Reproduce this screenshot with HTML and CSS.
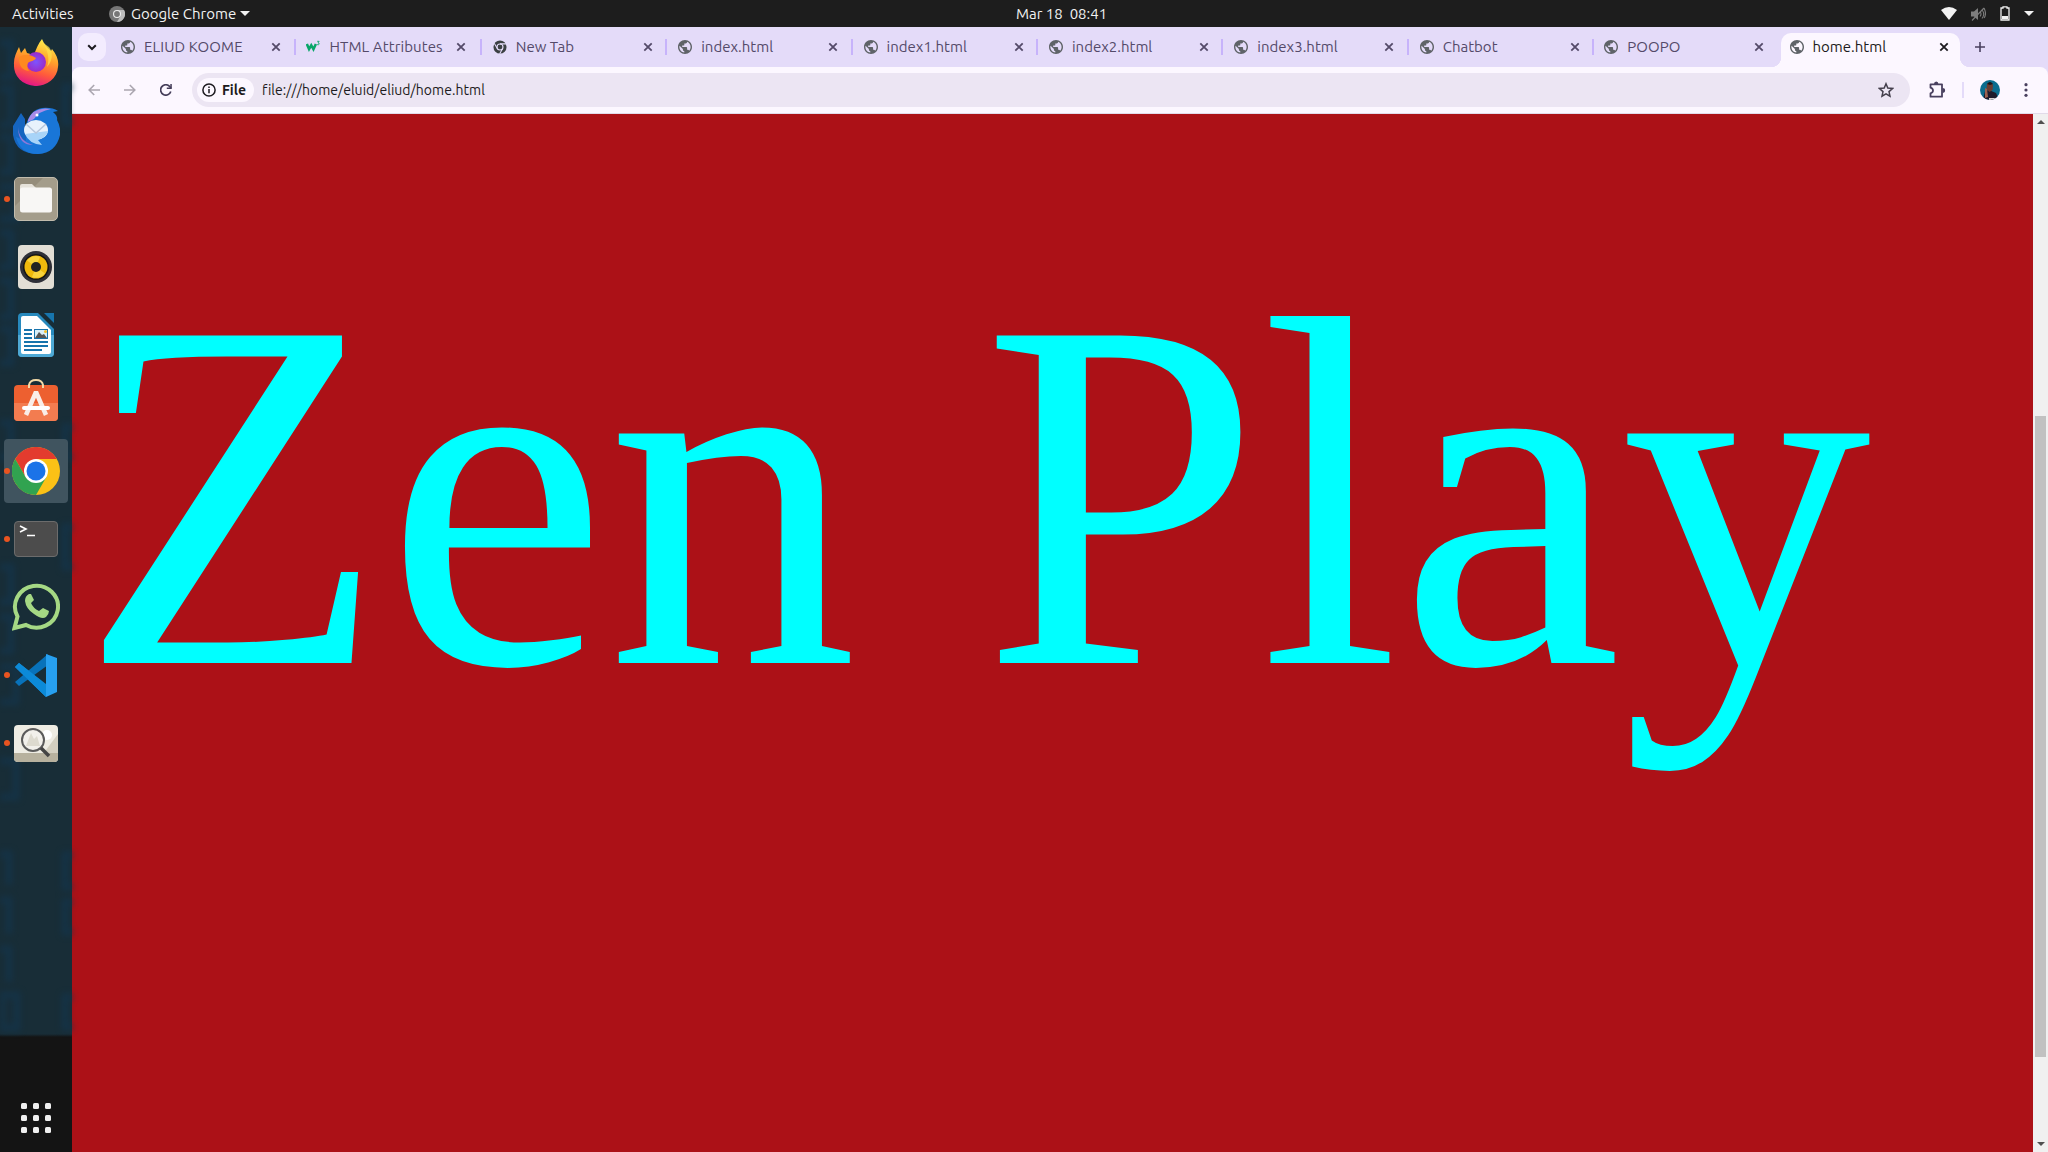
FILE: index.html
```html
<!DOCTYPE html>
<html lang="en">
<head>
<meta charset="utf-8">
<title>home.html</title>
<link rel="stylesheet" href="styles.css">
</head>
<body>
<svg class="defs" width="0" height="0" aria-hidden="true">
  <symbol id="globe" viewBox="2 2 20 20"><path d="M12 2C6.480 2 2 6.480 2 12s4.480 10 10 10 10-4.480 10-10S17.520 2 12 2zm-1 17.930c-3.950-.49-7-3.850-7-7.930 0-.62.080-1.210.210-1.790L9 15v1c0 1.100.9 2 2 2v1.930zm6.900-2.540c-.26-.81-1-1.390-1.900-1.390h-1v-3c0-.55-.45-1-1-1H8v-2h2c.55 0 1-.45 1-1V7h2c1.100 0 2-.9 2-2v-.41c2.930 1.190 5 4.060 5 7.410 0 2.080-.8 3.970-2.100 5.390z" fill="#5f6368"/></symbol>
  <symbol id="close" viewBox="0 0 10 10"><path d="M1.3 1.3 8.7 8.7M8.7 1.3 1.3 8.7" stroke="currentColor" stroke-width="1.8"/></symbol>
  <symbol id="chrome-mono" viewBox="0 0 16 16"><circle cx="8" cy="8" r="7.5" fill="#3c4043"/><circle cx="8" cy="8" r="3.4" fill="none" stroke="#e4dbf9" stroke-width="1.3"/><path d="M8 4.4H15M4.9 9.8 1.4 3.8M11.1 9.8 7.6 15.8" stroke="#e4dbf9" stroke-width="1.2"/></symbol>
</svg>

<header class="topbar">
  <span class="activities">Activities</span>
  <div class="app-menu">
    <svg width="16" height="16" viewBox="0 0 16 16"><circle cx="8" cy="8" r="8" fill="#777"/><path d="M8 4H15A8 8 0 0 1 8 16L11.5 10z" fill="#bbb"/><circle cx="8" cy="8" r="4" fill="#eee"/><circle cx="8" cy="8" r="2.9" fill="#777"/></svg>
    <span class="app-name">Google Chrome</span>
    <i class="caret"></i>
  </div>
  <span class="clock">Mar 18&nbsp; 08:41</span>
  <div class="tray">
    <svg width="16" height="13" viewBox="0 0 16 13"><path d="M0 3Q8-3 16 3L8 13z" fill="#f2f2f2"/></svg>
    <svg width="15" height="14" viewBox="0 0 15 14"><path d="M0 4.5h3L7 1v12L3 9.500H0z" fill="#7d7d7d"/><path d="M9 4.500q2 2.500 0 5M11 3q3.500 4 0 8.500M13 1q3 6 0 10M1 13.500 13 1" fill="none" stroke="#7d7d7d" stroke-width="1.100"/></svg>
    <svg width="10" height="15" viewBox="0 0 10 15"><path d="M1 2h2V.8h4V2h2v12H1z" fill="none" stroke="#f2f2f2" stroke-width="1.300"/><path d="M2 10h6v3H2z" fill="#f2f2f2"/></svg>
    <i class="caret"></i>
  </div>
</header>

<div class="desktop">
  <nav class="dock">
    <svg class="wallpaper" width="72" height="1008" viewBox="0 0 72 1008"><g fill="none" stroke="#14344a" stroke-width="7"><path d="M0 16H11V50H0M0 62H11V98H0M0 110H11V145H0M0 160H16V192H0M0 206H11V240H0M0 254H11V290H0M0 302H11V336H0M0 396H11V430H0M0 540H11V575H0M0 590H11V624H0M0 640H16V675H0M0 734H16V770H0M0 827H9V858M0 873H9V907M0 922H9V955M2 968H17V1001H2zM72 828H65V860H72M72 875H65V905H72M72 970H65V1000H72M72 500H65V540H72M72 60H65V95H72M72 400H65V430H72"/></g></svg>
    <div class="launcher firefox"><svg width="48" height="48" viewBox="0 0 48 48"><defs><linearGradient id="ff" x1=".7" y1="0" x2=".4" y2="1"><stop offset="0" stop-color="#fff44f"/><stop offset=".4" stop-color="#ffa12b"/><stop offset=".7" stop-color="#ff5a3c"/><stop offset="1" stop-color="#e31587"/></linearGradient><radialGradient id="ffp"><stop offset="0" stop-color="#7c54ff"/><stop offset="1" stop-color="#9b2bc8"/></radialGradient></defs><path d="M2 27C1.500 20 4 15 7 9l2 6 4-5 2 5 7 2c2-6 4-11 8-16 2 5 5 8 9 12l1-2c5 6 7 12 6 18a22 20 0 0 1-44-2z" fill="url(#ff)"/><circle cx="24" cy="24" r="10" fill="url(#ffp)"/><path d="M7 19c6-3 10-3 17 1-1 3-6 3-8 5-1 3-1 5 1 8C9 32 7 27 7 19z" fill="#ff8a20"/><path d="M30 4c6 8 8 17 5 25 6-6 6-15 2-20z" fill="#ffe04a" opacity=".7"/></svg></div>
    <div class="launcher"><svg width="48" height="48" viewBox="0 0 48 48"><path d="M1 19 9 6 13 12 13 21 20 38 32 46 26 47Q4 47 1 28z" fill="#1565c0"/><path d="M14 18Q18 3 30 1 40 0 46 4L41 5Q46 9 45 13 49 20 48 28 44 46 26 47 8 47 4 30L14 34z" fill="#1976d8"/><path d="M16 13Q20 2 33 1.500L39 2Q27 4 22 12L16 15z" fill="#a78be8"/><path d="M6 20q1 14 15 18-15 0-15-18z" fill="#8c78d8"/><ellipse cx="24" cy="23" rx="12" ry="10" fill="#e8f2fc"/><path d="M13 27q4 10 17 11l-4-5q9-3 10-9z" fill="#a8d4f8"/><path d="M14 17l10 9 10-9" fill="none" stroke="#b7c7dc" stroke-width="1.500"/><circle cx="25" cy="8" r="1.500" fill="#fff"/></svg></div>
    <div class="launcher running"><svg width="48" height="48" viewBox="0 0 48 48"><rect x="2.500" y="2.500" width="43" height="43" rx="4.500" fill="#a49d8b" stroke="#c2bcad"/><path d="M3 31 31 3H7Q3 3 3 7z" fill="#958d7b"/><path d="M8 11q0-2 2-2h10l4 4h14v8H8z" fill="#e6e2da"/><rect x="8" y="12.500" width="32" height="25" rx="2.500" fill="#f8f7f5"/></svg></div>
    <div class="launcher"><svg width="48" height="48" viewBox="0 0 48 48"><rect x="6" y="2" width="36" height="44" rx="4" fill="#e2ded5"/><circle cx="24" cy="24" r="16" fill="#2f3038"/><circle cx="24" cy="24" r="13" fill="#151515"/><circle cx="24" cy="24" r="11.500" fill="#efb90c"/><path d="M24 24 15 17.500A11 11 0 0 1 28 13.800zM24 24l9 6.500A11 11 0 0 1 20 34z" fill="#f8d33c"/><circle cx="24" cy="24" r="5" fill="#222"/></svg></div>
    <div class="launcher"><svg width="48" height="48" viewBox="0 0 48 48"><path d="M10 2h16l16 16v24q0 4-4 4H10q-4 0-4-4V6q0-4 4-4z" fill="#2789bd"/><path d="M6 24h36v18q0 4-4 4H10q-4 0-4-4z" fill="#4ea9d5"/><path d="M11 5h14l14 14v22q0 2-2 2H11q-2 0-2-2V7q0-2 2-2z" fill="#fff"/><path d="M32 2h10v10z" fill="#1775ad"/><path d="M12 19h8M12 23h8M12 27h8M12 31h24M12 35h24M12 39h18" stroke="#1673ac" stroke-width="2"/><rect x="22.500" y="18.500" width="13" height="9" fill="#d9eff8" stroke="#1673ac"/><path d="M23 27l4-6 3 3 2-1 3 4z" fill="#555"/><circle cx="33.500" cy="20.500" r="1.500" fill="#f3bd27"/></svg></div>
    <div class="launcher"><svg width="48" height="48" viewBox="0 0 48 48"><rect x="2" y="6" width="44" height="36" rx="4" fill="#ed6030"/><path d="M2 24h44v14q0 4-4 4H6q-4 0-4-4z" fill="#f37c50"/><path d="M17 9V6q1-5 7-5t7 5v3" fill="none" stroke="#f3d9a7" stroke-width="2"/><path d="M14 36 24 13l10 23" fill="none" stroke="#f9eee8" stroke-width="4.500" stroke-linejoin="bevel"/><path d="M12 29h24" stroke="#fff" stroke-width="4" stroke-linecap="round"/></svg></div>
    <div class="launcher running active"><svg width="48" height="48" viewBox="0 0 48 48"><circle cx="24" cy="24" r="24" fill="#fbc116"/><path d="M24 24V12H44.800A24 24 0 0 0 3.200 12L13.600 30z" fill="#e33b2e"/><path d="M3.200 12A24 24 0 0 0 24 48L34.400 30 24 34 13.600 30z" fill="#31a350"/><circle cx="24" cy="24" r="12" fill="#fff"/><circle cx="24" cy="24" r="9.500" fill="#1b73e8"/></svg></div>
    <div class="launcher running"><svg width="48" height="48" viewBox="0 0 48 48"><rect x="2.500" y="6.500" width="43" height="35" rx="3.500" fill="#4c4c4c" stroke="#6c6c6c"/><path d="M8 11l6 3-6 3M15 20.500h8" fill="none" stroke="#fff" stroke-width="1.600"/></svg></div>
    <div class="launcher"><svg width="48" height="48" viewBox="0 0 48 48"><path d="M2.500 45 5.500 33.500A21.500 21 0 1 1 14 42z" fill="none" stroke="#a5d884" stroke-width="4"/><path d="M17 11q-4 2-4 7 1 8 9 13 8 6 12 3 3-3 3-6l-6-3-4 3q-6-3-8-8l3-3-3-6z" fill="#a5d884"/></svg></div>
    <div class="launcher running"><svg width="48" height="48" viewBox="0 0 48 48"><path d="M3 16l4-4L34 34V46z" fill="#1592dc"/><path d="M3 31l4 4L36 14V3z" fill="#0872ba"/><path d="M3 16l4-4L34 33v13z" fill="#0c8ad8"/><path d="M34 3l11 4v34l-11 5z" fill="#27a0f0"/></svg></div>
    <div class="launcher running"><svg width="48" height="48" viewBox="0 0 48 48"><rect x="2" y="6" width="44" height="37" rx="4" fill="#eeece3"/><path d="M25 43 46 15v24q0 4-4 4z" fill="#d3cfc0"/><path d="M2 34h44v5q0 4-4 4H6q-4 0-4-4z" fill="#b7b19e"/><circle cx="35" cy="16" r="5" fill="#fff"/><circle cx="21" cy="21" r="11" fill="#f2f0eb" stroke="#5b5b5b" stroke-width="2"/><path d="M14 27l5-13 3 6 3-3 3 10z" fill="#dddacf"/><path d="M29 29l8 8" stroke="#444" stroke-width="3.500"/></svg></div>
    <div class="show-apps"><i></i><i></i><i></i><i></i><i></i><i></i><i></i><i></i><i></i></div>
  </nav>

  <main class="browser">
    <div class="tabstrip">
      <div class="tab-search"><svg width="10" height="7" viewBox="0 0 10 7"><path d="M1.200 1.200 5 5l3.800-3.800" fill="none" stroke="#1d1b20" stroke-width="2"/></svg></div>
      <div class="tab"><svg class="favicon"><use href="#globe"/></svg><span class="title caps">ELIUD KOOME</span><svg class="close"><use href="#close"/></svg></div>
      <div class="tab"><svg class="favicon" viewBox="0 0 16 16"><path d="M1 4.500 3.500 10.500 6 6 8.500 10.500 11.300 4.500" fill="none" stroke="#08a669" stroke-width="2.900"/><path d="M12.800 1.500H15L13.800 3.200Q15.400 3.300 15 4.800 14.500 5.800 12.700 5.300" fill="none" stroke="#08a669"/></svg><span class="title attr">HTML Attributes</span><svg class="close"><use href="#close"/></svg></div>
      <div class="tab shifted"><svg class="favicon"><use href="#chrome-mono"/></svg><span class="title">New Tab</span><svg class="close"><use href="#close"/></svg></div>
      <div class="tab shifted"><svg class="favicon"><use href="#globe"/></svg><span class="title">index.html</span><svg class="close"><use href="#close"/></svg></div>
      <div class="tab shifted"><svg class="favicon"><use href="#globe"/></svg><span class="title">index1.html</span><svg class="close"><use href="#close"/></svg></div>
      <div class="tab shifted"><svg class="favicon"><use href="#globe"/></svg><span class="title">index2.html</span><svg class="close"><use href="#close"/></svg></div>
      <div class="tab shifted"><svg class="favicon"><use href="#globe"/></svg><span class="title">index3.html</span><svg class="close"><use href="#close"/></svg></div>
      <div class="tab shifted"><svg class="favicon"><use href="#globe"/></svg><span class="title">Chatbot</span><svg class="close"><use href="#close"/></svg></div>
      <div class="tab last"><svg class="favicon"><use href="#globe"/></svg><span class="title caps">POOPO</span><svg class="close"><use href="#close"/></svg></div>
      <div class="tab current"><svg class="favicon"><use href="#globe"/></svg><span class="title">home.html</span><svg class="close"><use href="#close"/></svg></div>
      <svg class="new-tab" width="10" height="10" viewBox="0 0 10 10"><path d="M5 0v10M0 5h10" stroke="#49405f" stroke-width="1.600"/></svg>
    </div>

    <div class="toolbar">
      <svg class="nav" viewBox="0 0 12 12"><path d="M12 6H1.500M6.200 1 1.200 6l5 5" fill="none" stroke="#aba6b0" stroke-width="1.600"/></svg>
      <svg class="nav" viewBox="0 0 12 12"><path d="M0 6h10.500M5.800 1l5 5-5 5" fill="none" stroke="#aba6b0" stroke-width="1.600"/></svg>
      <svg class="nav" viewBox="0 0 12 12"><path d="M10.800 7.500A5.200 5.200 0 1 1 9.900 2.700L11 4" fill="none" stroke="#443d59" stroke-width="1.700"/><path d="M11.800 0v5H6.800V3.600h3.500V0z" fill="#443d59"/></svg>
      <div class="omnibox">
        <div class="chip"><svg width="14" height="14" viewBox="0 0 14 14"><circle cx="7" cy="7" r="6.100" fill="none" stroke="#1d1b20" stroke-width="1.500"/><path d="M7 6v4.300M7 3.400v1.600" stroke="#1d1b20" stroke-width="1.500"/></svg><span>File</span></div>
        <span class="url">file:///home/eluid/eliud/home.html</span>
        <svg class="star" width="16" height="16" viewBox="0 0 16 16"><path d="M8 1.800 9.800 6.100 14.500 6.500 11 9.600 12 14.200 8 11.800 4 14.200 5 9.600 1.500 6.500 6.200 6.100z" fill="none" stroke="#443f4c" stroke-width="1.500"/></svg>
      </div>
      <svg class="puzzle" width="18" height="18" viewBox="0 0 18 18"><path d="M2.500 3.300H14V15.700H2.500V12.300Q5 11.500 5 9.500T2.500 6.700z" fill="none" stroke="#49405f" stroke-width="1.800" stroke-linejoin="round"/><path d="M6 3a2.200 2.600 0 0 1 4.400 0zM14.500 7a2.600 2.400 0 0 1 0 4.800z" fill="#49405f"/></svg>
      <i class="divider"></i>
      <svg class="avatar" width="20" height="20" viewBox="0 0 20 20"><defs><clipPath id="face"><circle cx="10" cy="10" r="10"/></clipPath></defs><g clip-path="url(#face)"><path d="M0 0h20v20H0z" fill="#0a6d8e"/><path d="M3 20 5 11 9 10 16 13 19 20z" fill="#1d1b2b"/><path d="M7 4q4-3 6 1l-.5 5-3 2-3-3z" fill="#6b3d30"/><path d="M7 4q3-4 6 0l-3 1z" fill="#1c1518"/><path d="M5 8l2 1 1 8-3 1z" fill="#9a6250"/><path d="M9 18h6v2H9z" fill="#d8d3d0"/></g></svg>
      <svg class="more" width="4" height="14" viewBox="0 0 4 14"><g fill="#49405f"><circle cx="2" cy="1.700" r="1.600"/><circle cx="2" cy="7" r="1.600"/><circle cx="2" cy="12.300" r="1.600"/></g></svg>
    </div>

    <div class="viewport">
      <section class="page"><p class="headline">Zen Play</p></section>
      <div class="scrollbar"><i class="up"></i><i class="thumb"></i><i class="down"></i></div>
    </div>
  </main>
</div>
</body>
</html>
```
FILE: styles.css
```css
* { box-sizing: border-box; }
body { margin: 0; width: 2048px; height: 1152px; overflow: hidden; font: 14px/20px Ubuntu, "Noto Sans", sans-serif; background: #141414; }
svg { display: block; flex: none; }
.defs { position: absolute; }
.topbar { position: relative; display: flex; align-items: center; height: 27px; padding: 0 14px 0 12px; background: #1d1d1d; color: #f2f2f2; font-size: 15px; }
.activities { width: 97px; }
.app-menu { display: flex; align-items: center; }
.app-name { width: 104px; margin: 0 5px 0 6px; white-space: nowrap; }
.caret { border: 5px solid transparent; border-top-color: #f2f2f2; border-bottom: 0; }
.clock { position: absolute; left: 1016px; white-space: nowrap; }
.tray { display: flex; align-items: center; gap: 14px; margin-left: auto; }
.desktop { display: flex; height: 1125px; }
.dock { position: relative; width: 72px; flex: none; display: flex; flex-direction: column; gap: 4px; padding-top: 4px; background: linear-gradient(#182d37 0 1007px, #141414 1010px); }
.wallpaper { position: absolute; left: 0; top: 0; filter: blur(3px); opacity: .8; }
.launcher { position: relative; height: 64px; margin: 0 4px; display: grid; place-items: center; border-radius: 4px; }
.launcher.firefox { padding-bottom: 3px; }
.launcher.active { background: #40545f; }
.launcher.running::before { content: ""; position: absolute; left: 0; top: 29px; width: 6px; height: 6px; border-radius: 50%; background: #e95420; }
.show-apps { display: grid; grid-template-columns: repeat(3, 6px); gap: 6px; margin: auto auto 19px 21px; }
.show-apps i { height: 6px; border-radius: 1.500px; background: #f0f0f0; }
.browser { flex: 1; display: flex; flex-direction: column; }
.tabstrip { position: relative; z-index: 1; display: flex; align-items: flex-start; height: 40px; padding: 6px 0 0 6px; background: #e4dbf9; color: #544a69; font-size: 15px; }
.tab-search { width: 28px; height: 28px; margin-right: 4px; border-radius: 10px; background: #f3ecfe; display: grid; place-items: center; }
.tab { position: relative; display: flex; align-items: center; width: 185.400px; height: 28px; padding-left: 11px; }
.tab.shifted { padding-left: 12px; }
.tab::after { content: ""; position: absolute; right: -1px; top: 6px; width: 2px; height: 16px; background: #c7b3fb; }
.tab.last::after, .tab.current::after { display: none; }
.favicon { width: 14px; height: 14px; }
.title { width: 123px; margin-left: 9px; white-space: nowrap; }
.title.caps { letter-spacing: .1px; }
.title.attr { letter-spacing: .1px; }
.close { width: 10px; height: 10px; margin-left: 4px; }
.tab.current { width: 179px; height: 34px; margin-left: 2px; padding: 0 0 6px 9px; border-radius: 10px 10px 0 0; background: #fcf7ff; color: #1d1b20; }
.tab.current .title { width: 122px; }
.tab.current::before { content: ""; position: absolute; left: -10px; right: -10px; bottom: 0; height: 10px; background: radial-gradient(circle at 0 0, transparent 10px, #fcf7ff 10.500px) left / 10px 10px no-repeat, radial-gradient(circle at 100% 0, transparent 10px, #fcf7ff 10.500px) right / 10px 10px no-repeat; }
.new-tab { margin: 9px 0 0 15px; }
.toolbar { display: flex; align-items: center; height: 47px; padding: 0 0 1px 16px; background: #fcf7ff; border-bottom: 1px solid #e2dbe9; border-radius: 8px 8px 0 0; box-shadow: 0 -8px 0 #e4dbf9; }
.nav { width: 12px; height: 12px; margin-right: 24px; }
.omnibox { display: flex; align-items: center; width: 1718px; height: 34px; margin-left: -4px; padding: 0 16px 0 5px; border-radius: 17px; background: #ece5f3; color: #1d1b20; }
.chip { display: flex; align-items: center; gap: 6px; width: 57px; height: 24px; padding-left: 5px; border-radius: 12px; background: #fcf7ff; font-weight: 600; }
.url { margin-left: 8px; letter-spacing: .04px; white-space: nowrap; }
.star { margin-left: auto; }
.puzzle { margin-left: 18px; }
.divider { width: 2px; height: 16px; margin-left: 16px; background: #e4dbf9; }
.avatar { margin-left: 16px; }
.more { margin-left: 24px; }
.viewport { flex: 1; display: flex; background: #ac1117; }
.page { width: 1961px; height: 1038px; overflow: hidden; }
.headline { margin: 93px 0 0 8px; font: 500px/575px "Liberation Serif", serif; color: #0ff; white-space: nowrap; }
.scrollbar { position: relative; width: 15px; background: #f0f0f0; }
.thumb { position: absolute; left: 2px; top: 302px; width: 11px; height: 641px; background: #c1c1c1; }
.up, .down { position: absolute; left: 4px; border: 4px solid transparent; }
.up { top: 6px; border-top: 0; border-bottom-color: #505050; }
.down { bottom: 6px; border-bottom: 0; border-top-color: #505050; }
```
